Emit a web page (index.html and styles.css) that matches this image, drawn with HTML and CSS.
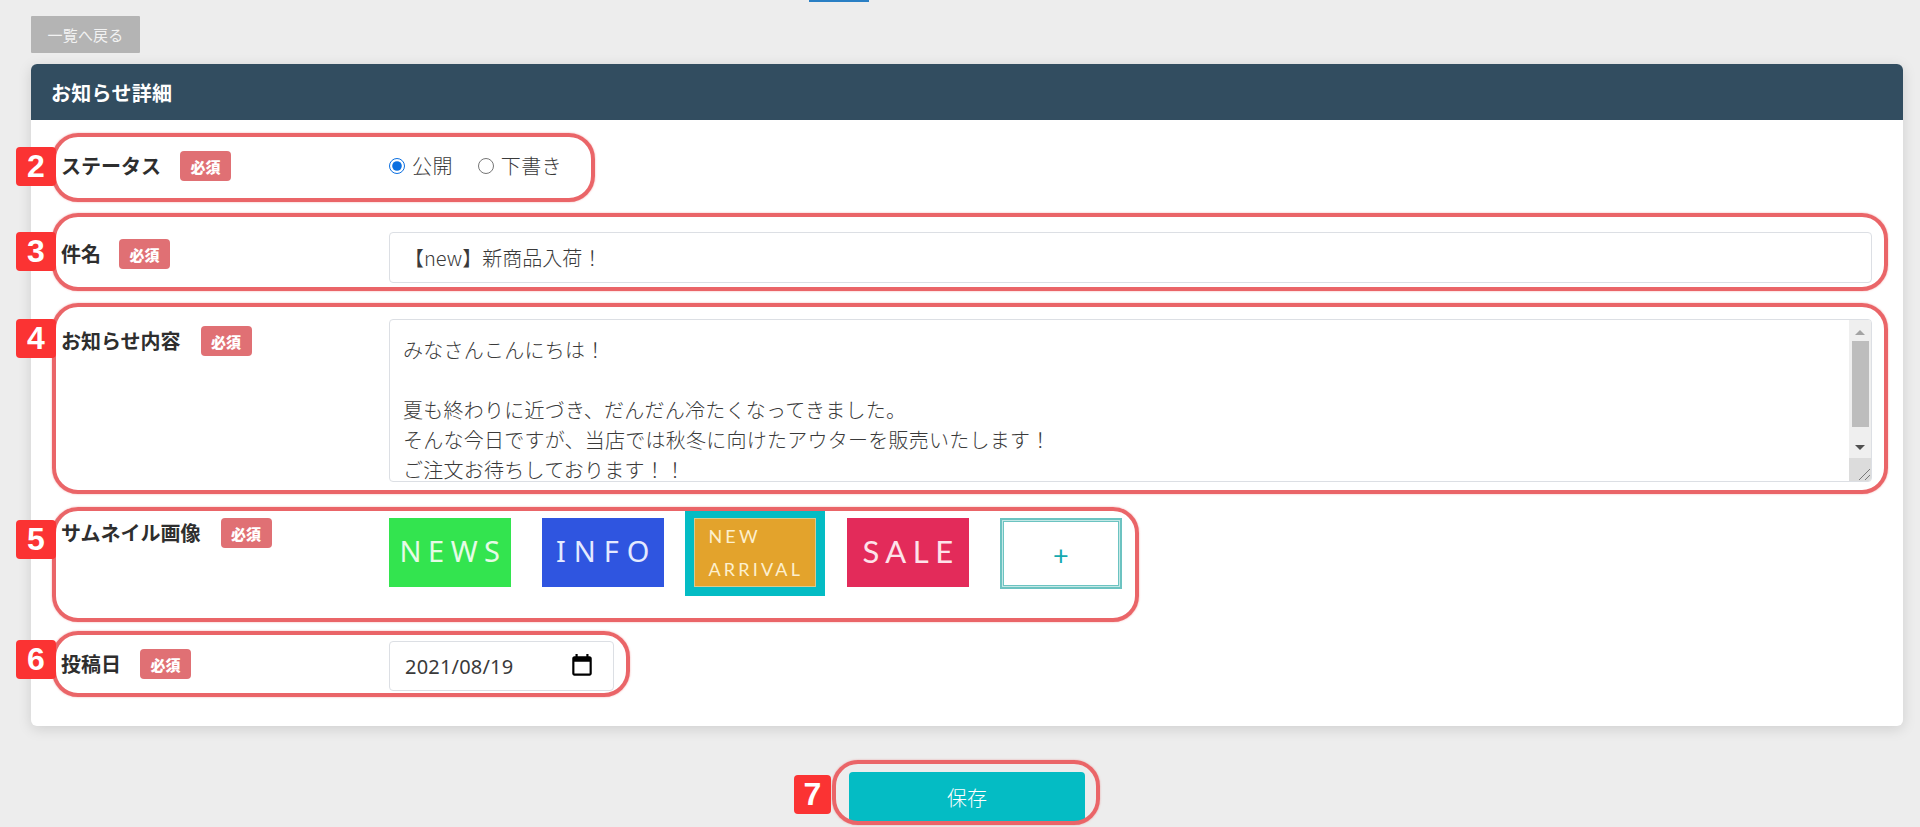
FILE: index.html
```html
<!DOCTYPE html>
<html lang="ja">
<head>
<meta charset="utf-8">
<title>お知らせ詳細</title>
<link rel="stylesheet" href="styles.css">
</head>
<body>
<div class="top-tab"></div>
<main class="page">
  <a class="back-btn">一覧へ戻る</a>
  <section class="card">
    <h2 class="card-head">お知らせ詳細</h2>
    <div class="card-body">
      <div class="row row-status">
        <div class="label-cell"><span class="label">ステータス</span><span class="badge">必須</span></div>
        <div class="radios">
          <label class="radio-item"><input type="radio" name="status" checked><span>公開</span></label>
          <label class="radio-item"><input type="radio" name="status"><span>下書き</span></label>
        </div>
      </div>
      <div class="row row-subject">
        <div class="label-cell"><span class="label">件名</span><span class="badge">必須</span></div>
        <div class="field field-wide">【new】新商品入荷！</div>
      </div>
      <div class="row row-body">
        <div class="label-cell"><span class="label">お知らせ内容</span><span class="badge">必須</span></div>
        <div class="field field-area">
          <div class="area-text">みなさんこんにちは！<br><br>夏も終わりに近づき、だんだん冷たくなってきました。<br>そんな今日ですが、当店では秋冬に向けたアウターを販売いたします！<br>ご注文お待ちしております！！</div>
          <div class="scrollbar">
            <span class="arrow arrow-up"></span>
            <span class="thumb"></span>
            <span class="arrow arrow-down"></span>
            <span class="corner">
              <svg width="22" height="23" viewBox="0 0 22 23"><path d="M10 22 21 11M16 22 21 17" stroke="#777" stroke-width="1" fill="none"/></svg>
            </span>
          </div>
        </div>
      </div>
      <div class="row row-thumbs">
        <div class="label-cell"><span class="label">サムネイル画像</span><span class="badge">必須</span></div>
        <div class="thumbs">
          <div class="thumb-card thumb-news">NEWS</div>
          <div class="thumb-card thumb-info">INFO</div>
          <div class="thumb-card thumb-new">NEW<br>ARRIVAL</div>
          <div class="thumb-card thumb-sale">SALE</div>
          <div class="thumb-card thumb-add">+</div>
        </div>
      </div>
      <div class="row row-date">
        <div class="label-cell"><span class="label">投稿日</span><span class="badge">必須</span></div>
        <div class="field field-date">
          <span>2021/08/19</span>
          <svg class="cal" width="26" height="26" viewBox="0 0 24 24"><path d="M19 3h-1V1h-2v2H8V1H6v2H5c-1.11 0-1.99.9-1.99 2L3 19c0 1.1.89 2 2 2h14c1.1 0 2-.9 2-2V5c0-1.1-.9-2-2-2zm0 16H5V8h14v11z" fill="#000"/></svg>
        </div>
      </div>
    </div>
  </section>
  <div class="actions"><a class="save-btn">保存</a></div>
</main>

<div class="ring ring-2"></div>
<div class="ring ring-3"></div>
<div class="ring ring-4"></div>
<div class="ring ring-5"></div>
<div class="ring ring-6"></div>
<div class="ring ring-7"></div>
<div class="num num-2">2</div>
<div class="num num-3">3</div>
<div class="num num-4">4</div>
<div class="num num-5">5</div>
<div class="num num-6">6</div>
<div class="num num-7">7</div>
</body>
</html>
```
FILE: styles.css
```css
* { box-sizing: border-box; }
html, body { margin: 0; height: 827px; overflow: hidden; }
body {
  position: relative;
  background: #ededed;
  font-family: "Noto Sans CJK JP", "Noto Sans", sans-serif;
  color: #333;
}
.top-tab {
  position: absolute;
  left: 809px;
  top: 0;
  width: 60px;
  height: 2px;
  background: #2a7fc4;
}
.page { padding: 16px 17px 0 31px; }
.back-btn {
  display: flex;
  width: 109px;
  height: 37px;
  align-items: center;
  justify-content: center;
  background: #b4b4b4;
  color: #f2f2f2;
  font-size: 15px;
  letter-spacing: .2px;
  font-weight: 400;
  border-radius: 1px;
}
.card {
  margin-top: 11px;
  background: #fff;
  border-radius: 6px;
  box-shadow: 0 3px 14px rgba(0, 0, 0, .13);
  height: 662px;
}
.card-head {
  margin: 0;
  height: 56px;
  padding-left: 20px;
  display: flex;
  align-items: center;
  background: #324d60;
  color: #fff;
  font-size: 20px;
  font-weight: 700;
  letter-spacing: .3px;
  border-radius: 6px 6px 0 0;
}
.card-body {
  padding: 25px 31px 36px 30px;
  display: flex;
  flex-direction: column;
  gap: 36px;
}
.row { display: flex; align-items: flex-start; }
.label-cell {
  flex: 0 0 328px;
  display: flex;
  align-items: center;
  gap: 20px;
}
.row-status { height: 51px; }
.row-status .label-cell { padding-top: 6px; gap: 19px; }
.row-subject { height: 51px; }
.row-subject .label-cell { padding-top: 7px; gap: 18px; }
.row-body { height: 163px; }
.row-body .label-cell { padding-top: 7px; }
.row-thumbs { height: 87px; }
.row-date { height: 50px; }
.row-date .label-cell { padding-top: 8px; gap: 19px; }
.label {
  font-size: 20px;
  font-weight: 700;
  line-height: 30px;
  color: #2e2e2e;
}
.badge {
  display: flex;
  width: 51px;
  height: 30px;
  align-items: center;
  justify-content: center;
  background: #e07074;
  color: #fff;
  font-size: 15px;
  font-weight: 900;
  border-radius: 4px;
}
.radios { display: flex; gap: 25px; padding-top: 6px; }
.radio-item {
  display: flex;
  align-items: center;
  gap: 7px;
  font-size: 20px;
  font-weight: 300;
  line-height: 30px;
  color: #3a3a3a;
}
.radio-item input {
  margin: 0;
  width: 16px;
  height: 16px;
  accent-color: #0b6fe0;
}
.radio-item span { letter-spacing: .4px; }
.field {
  background: #fff;
  border: 1px solid #dcdfe4;
  border-radius: 4px;
  font-size: 20px;
  font-weight: 300;
  color: #3a3a3a;
}
.field-wide {
  flex: 1;
  height: 51px;
  padding: 0 14px;
  display: flex;
  align-items: center;
}
.field-area {
  position: relative;
  flex: 1;
  height: 163px;
  overflow: hidden;
}
.area-text {
  padding: 15px 13px 0;
  line-height: 30px;
  letter-spacing: .25px;
  height: 161px;
  overflow: hidden;
}
.scrollbar {
  position: absolute;
  right: 0;
  top: 0;
  bottom: 0;
  width: 22px;
  background: #efefef;
  display: block;
}
.arrow {
  position: absolute;
  left: 6px;
  width: 0;
  height: 0;
  border-left: 5px solid transparent;
  border-right: 5px solid transparent;
}
.arrow-up { top: 10px; border-bottom: 5px solid #a3a3a3; }
.arrow-down { top: 125px; border-top: 5px solid #505050; }
.thumb {
  position: absolute;
  left: 3px;
  top: 21px;
  width: 17px;
  height: 86px;
  background: #bdbdbd;
}
.corner {
  position: absolute;
  left: 0;
  bottom: 0;
  width: 22px;
  height: 23px;
  background: #dcdcdc;
  display: block;
}
.corner svg { display: block; }
.thumbs { display: flex; align-items: flex-start; gap: 30.7px; }
.thumb-card {
  width: 122px;
  height: 69px;
  flex: none;
  display: flex;
  align-items: center;
  justify-content: center;
  color: #fff;
  font-family: "Lato", "Noto Sans", sans-serif;
  font-size: 31px;
  letter-spacing: 6.5px;
  padding-left: 6px;
  padding-bottom: 4px;
}
.thumb-news,
.thumb-info {
  font-family: "Noto Sans", "Lato", sans-serif;
  font-size: 29px;
  font-weight: 400;
}
.thumb-news { background: #33e44f; color: #e6fbe6; }
.thumb-info { background: #2f55e0; color: #e4eaff; letter-spacing: 8px; padding-left: 8px; }
.thumb-sale { background: #e32b5a; color: #fde3ea; }
.thumb-new {
  display: block;
  margin: -9px;
  width: 140px;
  height: 87px;
  padding: 2px 0 0 14px;
  background: #e3a32c;
  background-clip: padding-box;
  border: 9px solid #04bcc4;
  outline: 1px solid #d9c98f;
  outline-offset: -10px;
  color: #fdf0cf;
  font-size: 18px;
  letter-spacing: 3.2px;
  line-height: 33px;
}
.thumb-add {
  height: 71px;
  border: 4px solid #6cc3c1;
  outline: 1px solid #c4e8e6;
  outline-offset: -3px;
  color: #14a9af;
  font-size: 27px;
  letter-spacing: 0;
  padding: 2px 0 0;
}
.field-date {
  width: 225px;
  height: 50px;
  padding: 0 18px 0 15px;
  display: flex;
  align-items: center;
  justify-content: space-between;
  font-family: "Noto Sans", sans-serif;
  font-weight: 400;
  letter-spacing: .2px;
  color: #3a3a3a;
}
.cal { flex: none; }
.actions { display: flex; justify-content: center; margin-top: 46px; }
.save-btn {
  display: flex;
  width: 236px;
  height: 50px;
  align-items: center;
  justify-content: center;
  background: #04bcc4;
  color: #fff;
  font-size: 20px;
  font-weight: 300;
  border-radius: 4px;
}

/* annotation overlays */
.ring {
  position: absolute;
  border: 4px solid #ea6568;
  border-radius: 26px;
  box-shadow: 0 0 2px rgba(234, 101, 104, .6);
  pointer-events: none;
}
.ring-2 { left: 52px; top: 133px; width: 543px; height: 69px; }
.ring-3 { left: 52px; top: 213px; width: 1836px; height: 78px; }
.ring-4 { left: 52px; top: 303px; width: 1836px; height: 191px; }
.ring-5 { left: 52px; top: 507px; width: 1087px; height: 115px; }
.ring-6 { left: 52px; top: 631px; width: 578px; height: 66px; }
.ring-7 { left: 832px; top: 760px; width: 268px; height: 65px; }
.num {
  position: absolute;
  width: 40px;
  height: 39px;
  display: flex;
  align-items: center;
  justify-content: center;
  background: #fb3333;
  color: #fff;
  border-radius: 4px;
  font-family: "Liberation Sans", Arial, sans-serif;
  font-size: 32px;
  font-weight: 700;
}
.num-2 { left: 16px; top: 147px; }
.num-3 { left: 16px; top: 232px; }
.num-4 { left: 16px; top: 319px; }
.num-5 { left: 16px; top: 520px; }
.num-6 { left: 16px; top: 640px; }
.num-7 { left: 794px; top: 775px; width: 37px; }
```
